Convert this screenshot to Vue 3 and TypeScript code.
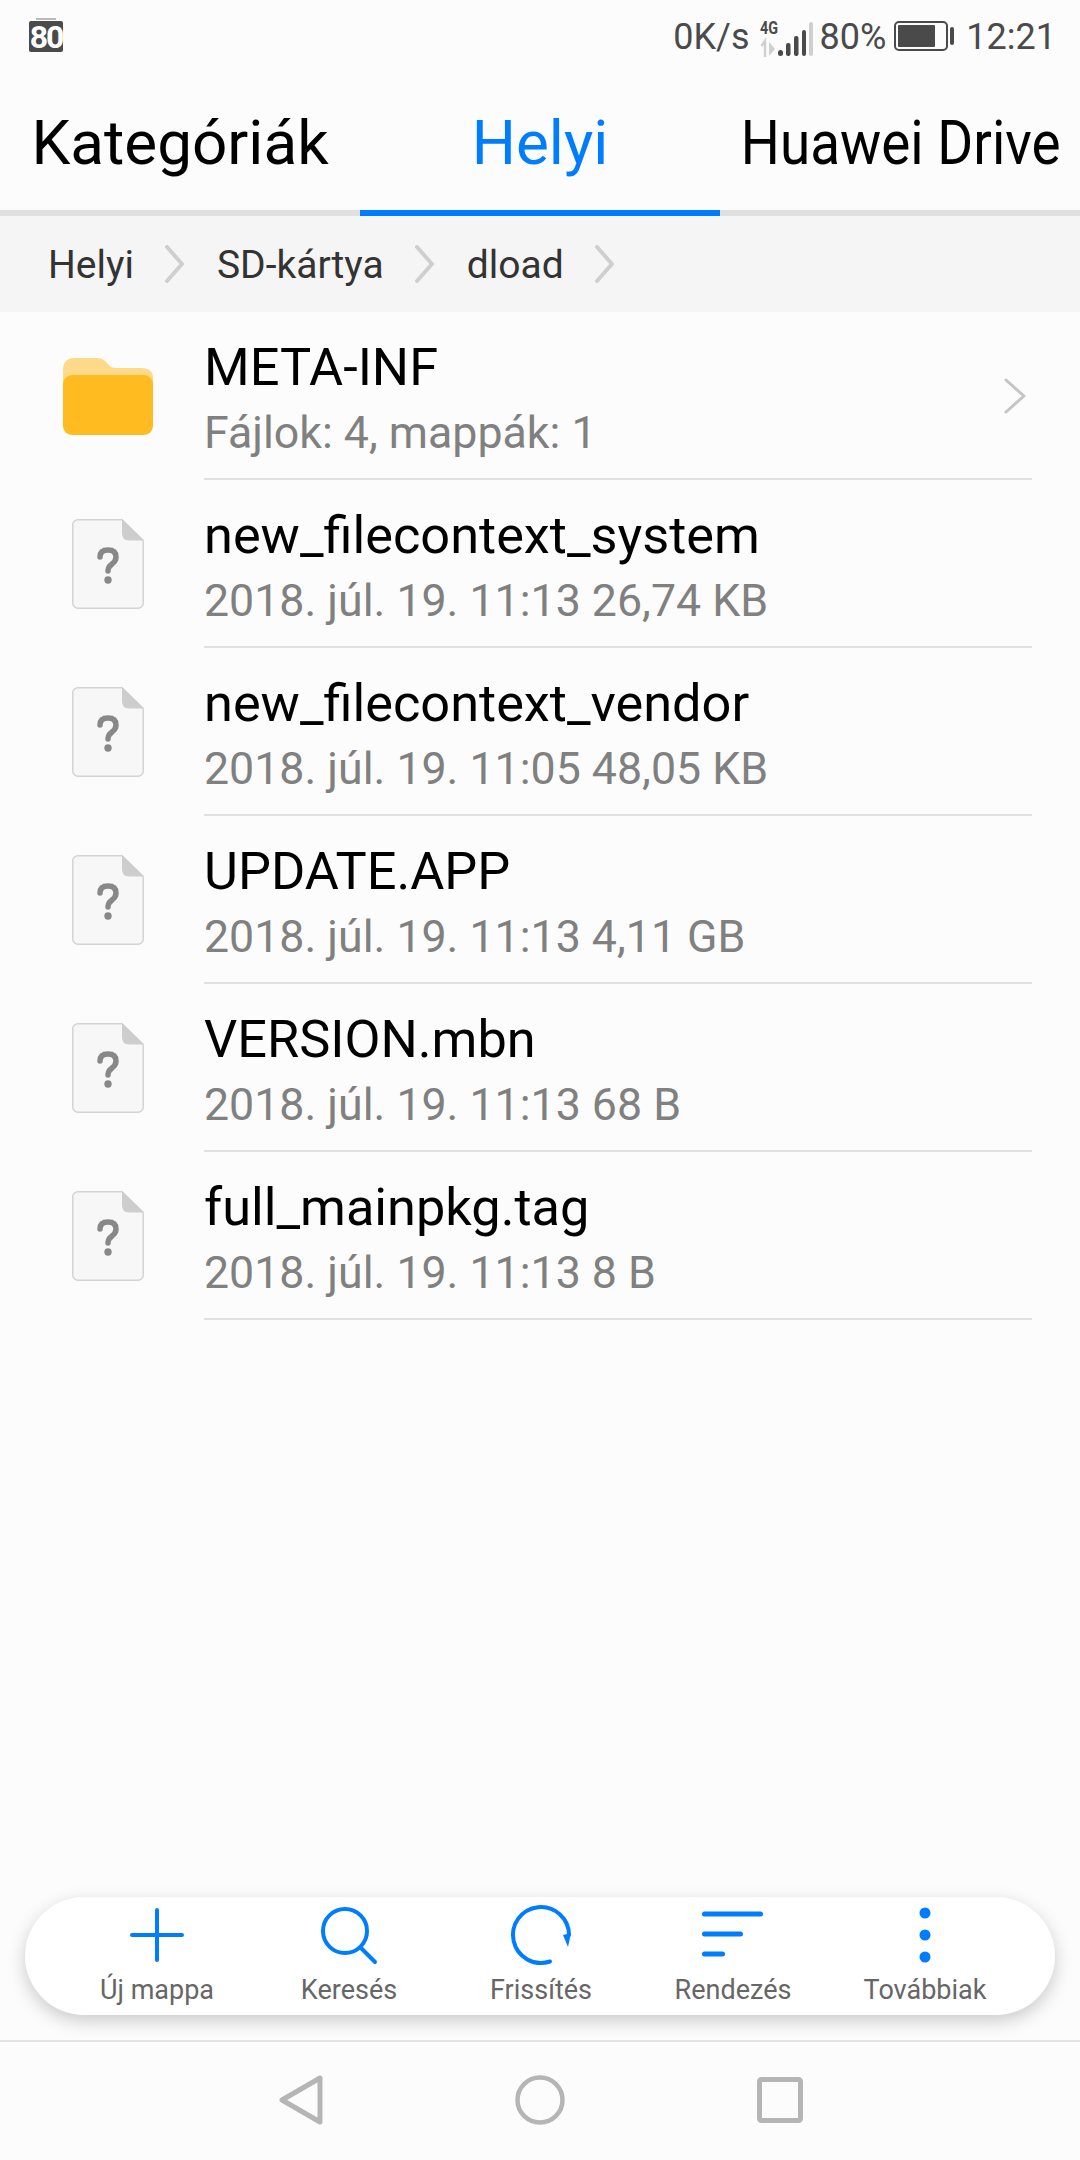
<template>
  <div class="page">
    <div class="status-bar">
      <div class="sim-badge"><span>80</span></div>
      <div class="status-right">
        <span class="speed">0K/s</span>
        <svg class="signal" width="54" height="40" viewBox="0 0 54 40">
          <text x="0" y="17" class="net-label" textLength="18" lengthAdjust="spacingAndGlyphs">4G</text>
          <path d="M5 40V24l-3.500 5" fill="none" stroke="#d0d0d0" stroke-width="2.500" />
          <path d="M9 25l6 7-6 7z" fill="#d0d0d0" />
          <rect x="18" y="33" width="5" height="6" rx="2.500" fill="#4a4a4a" />
          <rect x="26" y="26" width="4.500" height="13" rx="2" fill="#4a4a4a" />
          <rect x="34" y="19" width="4.500" height="20" rx="2" fill="#4a4a4a" />
          <rect x="42" y="13" width="4" height="26" rx="2" fill="#4a4a4a" />
          <rect x="49" y="5" width="4" height="34" rx="2" fill="#cfcfcf" />
        </svg>
        <span class="percent">80%</span>
        <svg class="battery" width="61" height="31" viewBox="0 0 61 31">
          <rect x="1" y="1" width="52" height="28" rx="4" fill="none" stroke="#4a4a4a" stroke-width="2" />
          <rect x="4" y="4" width="37" height="22" rx="1" fill="#4a4a4a" />
          <rect x="56" y="6" width="4" height="18" rx="2" fill="#4a4a4a" />
        </svg>
        <span class="clock">12:21</span>
      </div>
    </div>

    <div class="tabs">
      <div class="tab">Kategóriák</div>
      <div class="tab active">Helyi</div>
      <div class="tab"><span class="tab-squeezed">Huawei Drive</span></div>
    </div>

    <div class="crumbs">
      <template v-for="c in crumbs" :key="c">
        <span class="crumb">{{ c }}</span>
        <svg class="crumb-sep" width="21" height="38" viewBox="0 0 21 38">
          <path d="M3 2l15 17L3 36" fill="none" stroke="#cfcfcf" stroke-width="4" stroke-linecap="round" stroke-linejoin="round" />
        </svg>
      </template>
    </div>

    <div class="list">
      <div class="row">
        <div class="row-icon">
          <svg width="90" height="77" viewBox="0 0 90 77">
            <path d="M0 12Q0 0 12 0H35Q39 0 42 3L48 9Q50 10 54 10H78Q90 10 90 20V40H0z" fill="#ffd98a" />
            <rect x="0" y="17" width="90" height="60" rx="9" fill="#ffbb1f" />
          </svg>
        </div>
        <div class="row-body">
          <div class="row-title">META-INF</div>
          <div class="row-sub">Fájlok: 4, mappák: 1</div>
          <svg class="row-chevron" width="24" height="36" viewBox="0 0 24 36">
            <path d="M3 2l18 16L3 34" fill="none" stroke="#c4c4c4" stroke-width="3" stroke-linecap="round" stroke-linejoin="round" />
          </svg>
        </div>
      </div>
      <div v-for="f in files" :key="f.name" class="row">
        <div class="row-icon">
          <svg width="72" height="90" viewBox="0 0 72 90">
            <path d="M6 .75H50L71.250 21.500V84A5.250 5.250 0 0 1 66 89.250H6A5.250 5.250 0 0 1 .75 84V6A5.250 5.250 0 0 1 6 .75z" fill="#f7f7f7" stroke="#d4d4d4" stroke-width="1.500" />
            <path d="M50 0L72 21.500H57Q50 21.500 50 14z" fill="#cdcdcd" />
            <path d="M28 38Q28 31 36 31Q44 31 44 38Q44 42 40 45Q36 48 36 52" fill="none" stroke="#888" stroke-width="5.500" stroke-linecap="round" />
            <circle cx="36" cy="61" r="3.700" fill="#888" />
          </svg>
        </div>
        <div class="row-body">
          <div class="row-title">{{ f.name }}</div>
          <div class="row-sub">{{ f.meta }}</div>
        </div>
      </div>
    </div>

    <div class="toolbar">
      <div v-for="a in actions" :key="a.label" class="action">
        <svg width="70" height="66" viewBox="0 0 70 66" v-html="a.icon"></svg>
        <span class="action-label">{{ a.label }}</span>
      </div>
    </div>

    <div class="nav-bar">
      <svg width="44" height="50" viewBox="0 0 44 50">
        <path d="M41 3V47L3 25z" fill="none" stroke="#b5b5b5" stroke-width="5" stroke-linejoin="round" />
      </svg>
      <svg width="50" height="50" viewBox="0 0 50 50">
        <circle cx="25" cy="25" r="22.500" fill="none" stroke="#b5b5b5" stroke-width="4.500" />
      </svg>
      <svg width="46" height="46" viewBox="0 0 46 46">
        <rect x="2.500" y="2.500" width="41" height="41" rx="2" fill="none" stroke="#b5b5b5" stroke-width="5" />
      </svg>
    </div>
  </div>
</template>

<script setup lang="ts">
const crumbs = ['Helyi', 'SD-kártya', 'dload'];

const files = [
  { name: 'new_filecontext_system', meta: '2018. júl. 19. 11:13 26,74 KB' },
  { name: 'new_filecontext_vendor', meta: '2018. júl. 19. 11:05 48,05 KB' },
  { name: 'UPDATE.APP', meta: '2018. júl. 19. 11:13 4,11 GB' },
  { name: 'VERSION.mbn', meta: '2018. júl. 19. 11:13 68 B' },
  { name: 'full_mainpkg.tag', meta: '2018. júl. 19. 11:13 8 B' },
];

const blue = 'fill="none" stroke="#007dff" stroke-linecap="round"';
const actions = [
  {
    label: 'Új mappa',
    icon: `<path d="M35 8V58M10 33H60" ${blue} stroke-width="4" />`,
  },
  {
    label: 'Keresés',
    icon: `<circle cx="31" cy="29" r="22" ${blue} stroke-width="4" /><path d="M47 46L61 60" ${blue} stroke-width="4" />`,
  },
  {
    label: 'Frissítés',
    icon: `<path d="M63 33A28 28 0 1 0 44 59.500" ${blue} stroke-width="4" /><path d="M57 33L65 31L62 45z" fill="#007dff" />`,
  },
  {
    label: 'Rendezés',
    icon: `<path d="M6.500 12H62.500M6.500 32H42.500M6.500 52H24.500" ${blue} stroke-width="5" />`,
  },
  {
    label: 'Továbbiak',
    icon: `<circle cx="35" cy="11" r="5.500" fill="#007dff" /><circle cx="35" cy="33" r="5.500" fill="#007dff" /><circle cx="35" cy="55" r="5.500" fill="#007dff" />`,
  },
];
</script>

<style>
html,
body {
  margin: 0;
  background: #fcfcfc;
}
</style>

<style scoped>
.page {
  display: flex;
  flex-direction: column;
  width: 1080px;
  height: 2160px;
  background: #fcfcfc;
  font-family: Roboto, sans-serif;
  overflow: hidden;
}

.status-bar {
  display: flex;
  align-items: center;
  justify-content: space-between;
  height: 72px;
  padding: 1px 24px 0 29px;
  box-sizing: border-box;
  color: #4a4a4a;
  font-size: 36px;
}

.sim-badge {
  position: relative;
  display: flex;
  align-items: center;
  justify-content: center;
  width: 34px;
  height: 31px;
  border-radius: 2px;
  background: #4a4a4a;
  color: #fff;
  font-size: 32px;
  font-weight: 700;
  letter-spacing: -2px;
}

/* little tab on top of the SIM badge */
.sim-badge::before {
  content: "";
  position: absolute;
  top: -3px;
  left: 7px;
  width: 20px;
  height: 2px;
  background: #bbb;
}

.status-right {
  display: flex;
  align-items: center;
}

.speed {
  margin-right: 10px;
}

.signal {
  margin-right: 6px;
}

.net-label {
  font-size: 19px;
  font-weight: 700;
  fill: #4a4a4a;
}

.percent {
  margin-right: 8px;
}

.battery {
  margin-right: 11px;
}

.tabs {
  display: flex;
  height: 138px;
  border-bottom: 6px solid #e0e0e0;
}

.tab {
  flex: 0 0 360px;
  display: flex;
  align-items: center;
  justify-content: center;
  height: 138px;
  padding-top: 3px;
  box-sizing: border-box;
  color: #000;
  font-size: 62px;
  white-space: nowrap;
}

.tab.active {
  height: 144px;
  color: #007dff;
  border-bottom: 6px solid #007dff;
}

.tab-squeezed {
  display: inline-block;
  transform: scaleX(0.885);
}

.crumbs {
  display: flex;
  align-items: center;
  height: 96px;
  padding-left: 48px;
  background: #f5f5f5;
}

.crumb {
  margin-top: 2px;
  color: #333;
  font-size: 39px;
}

.crumb-sep {
  margin: 0 32px 0 30px;
}

.row {
  display: flex;
  height: 168px;
}

.row-icon {
  display: flex;
  align-items: center;
  justify-content: center;
  flex: none;
  width: 204px;
  padding-left: 12px;
  box-sizing: border-box;
}

.row-body {
  position: relative;
  flex: 1;
  margin-right: 48px;
  padding-top: 24px;
  border-bottom: 2px solid #e0e0e0;
}

.row-title {
  color: #000;
  font-size: 52.3px;
  line-height: 62px;
  white-space: nowrap;
}

.row-sub {
  margin-top: 7px;
  color: #808080;
  font-size: 44.7px;
  line-height: 56px;
  white-space: nowrap;
}

.row-chevron {
  position: absolute;
  top: 66px;
  right: 5px;
}

.toolbar {
  display: flex;
  justify-content: center;
  flex: none;
  height: 118px;
  margin: auto 25px 25px;
  padding-left: 2px;
  border-radius: 59px;
  background: #fff;
  box-shadow: 0 6px 18px rgba(0, 0, 0, 0.2);
}

.action {
  display: flex;
  flex-direction: column;
  align-items: center;
  width: 192px;
  padding-top: 5px;
}

.action-label {
  margin-top: 7px;
  color: #666;
  font-size: 27px;
  line-height: 30px;
  white-space: nowrap;
}

.nav-bar {
  display: flex;
  align-items: center;
  justify-content: center;
  flex: none;
  gap: 192px;
  height: 116px;
  padding: 0 0 2px 2px;
  border-top: 2px solid #e3e3e3;
}
</style>
